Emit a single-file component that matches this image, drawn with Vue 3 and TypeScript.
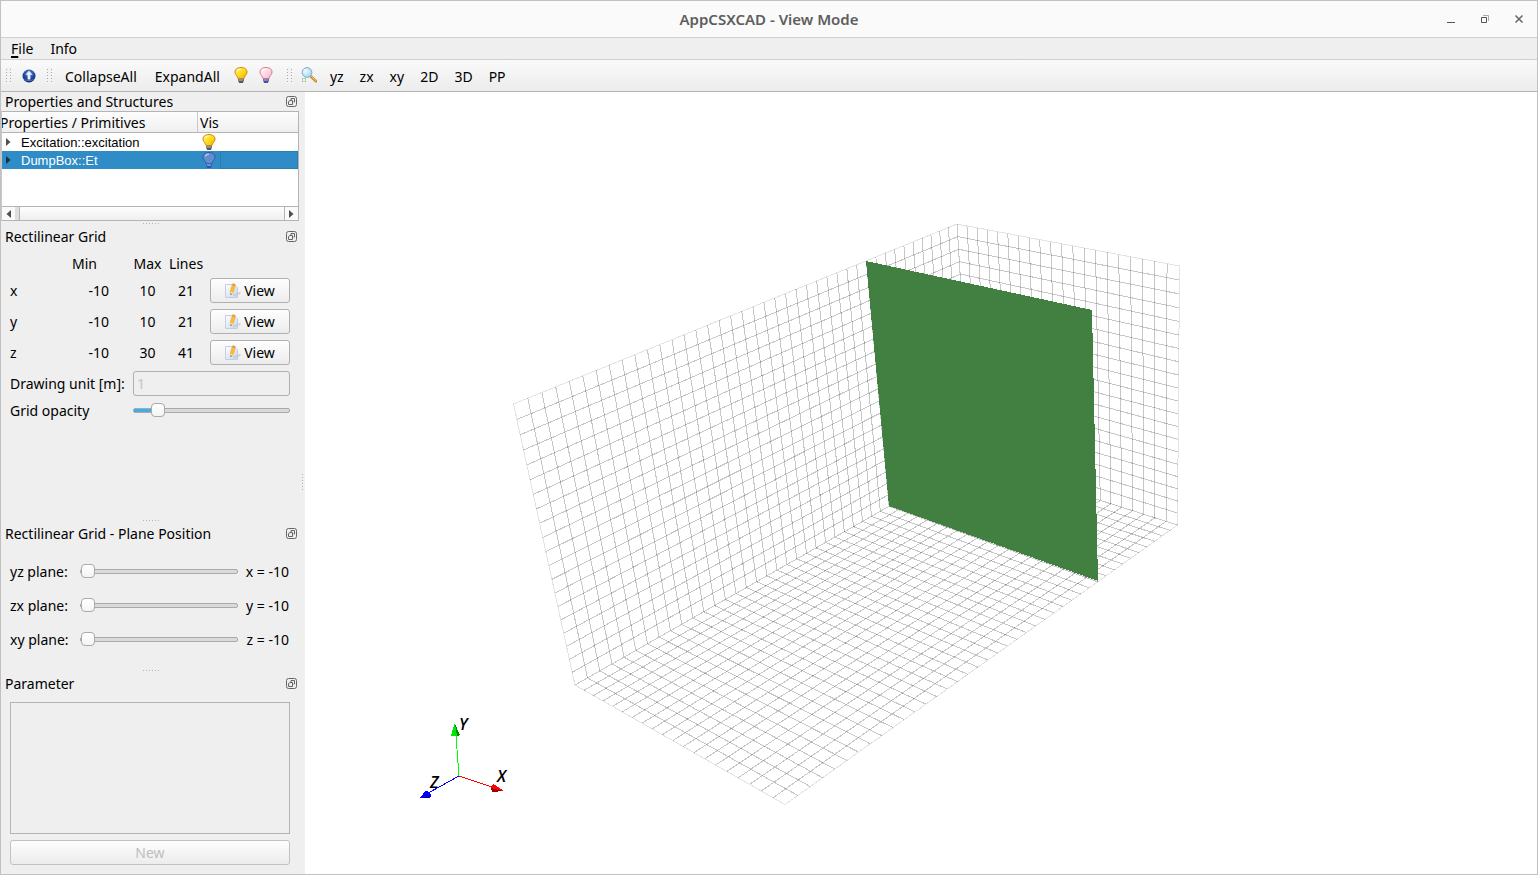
<script setup lang="ts">
import { computed, ref } from 'vue'

type Point = [number, number]
interface Segment { x1: number; y1: number; x2: number; y2: number; edge: boolean }

/** Projective map of the unit square onto the quad a(0,0) b(1,0) c(1,1) d(0,1). */
function project(a: Point, b: Point, c: Point, d: Point) {
  const dx1 = b[0] - c[0], dx2 = d[0] - c[0], sx = a[0] - b[0] + c[0] - d[0]
  const dy1 = b[1] - c[1], dy2 = d[1] - c[1], sy = a[1] - b[1] + c[1] - d[1]
  const det = dx1 * dy2 - dx2 * dy1
  const g = (sx * dy2 - dx2 * sy) / det
  const h = (dx1 * sy - sx * dy1) / det
  return (u: number, v: number): Point => {
    const w = g * u + h * v + 1
    return [
      ((b[0] - a[0] + g * b[0]) * u + (d[0] - a[0] + h * d[0]) * v + a[0]) / w,
      ((b[1] - a[1] + g * b[1]) * u + (d[1] - a[1] + h * d[1]) * v + a[1]) / w,
    ]
  }
}

function face(a: Point, b: Point, c: Point, d: Point, nu: number, nv: number): Segment[] {
  const at = project(a, b, c, d)
  const out: Segment[] = []
  const add = (p: Point, q: Point, edge: boolean) =>
    out.push({ x1: p[0], y1: p[1], x2: q[0], y2: q[1], edge })
  for (let i = 0; i <= nu; i++) add(at(i / nu, 0), at(i / nu, 1), i === 0 || i === nu)
  for (let j = 0; j <= nv; j++) add(at(0, j / nv), at(1, j / nv), j === 0 || j === nv)
  return out
}

const topBack: Point = [957, 224]
const topFront: Point = [513.5, 404]
const topRight: Point = [1179.5, 266]
const lowBack: Point = [971.7, 459.3]
const lowFront: Point = [575, 685]
const lowRight: Point = [1177.5, 525]
const lowNear: Point = [785, 804.5]

const gridLines = [
  ...face(topBack, topFront, lowFront, lowBack, 40, 20),
  ...face(topBack, topRight, lowRight, lowBack, 20, 20),
  ...face(lowBack, lowFront, lowNear, lowRight, 40, 20),
]

const opacity = ref(12)
const opacityFill = computed(() => `${opacity.value}%`)

const axes = [
  { name: 'x', min: -10, max: 10, lines: 21 },
  { name: 'y', min: -10, max: 10, lines: 21 },
  { name: 'z', min: -10, max: 30, lines: 41 },
]
const planes = ref([
  { id: 'yz', axis: 'x', max: 10, value: -10 },
  { id: 'zx', axis: 'y', max: 10, value: -10 },
  { id: 'xy', axis: 'z', max: 30, value: -10 },
])
const properties = [
  { name: 'Excitation::excitation', visible: true, selected: false },
  { name: 'DumpBox::Et', visible: false, selected: true },
]
const views = ['yz', 'zx', 'xy', '2D', '3D', 'PP']
</script>

<template>
  <div class="window">
    <svg class="defs" aria-hidden="true">
      <defs>
        <linearGradient id="gold" x1="0" y1="0" x2="1" y2="1">
          <stop offset="0" stop-color="#fff27a" /><stop offset=".5" stop-color="#ffdd1c" /><stop offset="1" stop-color="#f5a800" />
        </linearGradient>
        <linearGradient id="rose" x1="0" y1="0" x2="1" y2="1">
          <stop offset="0" stop-color="#fff" /><stop offset="1" stop-color="#f9b4cb" />
        </linearGradient>
        <radialGradient id="orb" cx=".5" cy=".3" r=".75">
          <stop offset="0" stop-color="#5c8ade" /><stop offset=".6" stop-color="#1c4295" /><stop offset="1" stop-color="#0a2160" />
        </radialGradient>
        <radialGradient id="lens" cx=".35" cy=".35" r=".8">
          <stop offset="0" stop-color="#f2fbff" /><stop offset="1" stop-color="#8fd0f0" />
        </radialGradient>
        <linearGradient id="sheet" x1="0" y1="0" x2="1" y2="1">
          <stop offset="0" stop-color="#fff" /><stop offset="1" stop-color="#c4d6ef" />
        </linearGradient>
        <symbol id="bulb" viewBox="0 0 16 16">
          <path d="M8 .5C4.500 .5 2 2.200 2 4.900c0 2.200 1.500 3.400 2.400 4.900.5.8.5 1.500.9 2h5.400c.4-.5.4-1.200.9-2C12.500 8.300 14 7.100 14 4.900 14 2.200 11.500.5 8 .5Z" fill="var(--glass)" stroke="var(--rim)" />
          <path d="M4.500 4.500C4.700 2.800 6.200 2 8 2" fill="none" stroke="#fff" stroke-opacity=".65" stroke-width="1.200" />
          <path d="M5.200 11.700h5.600v2.300L9.800 16H6.200l-1-2Z" fill="var(--base)" />
          <path d="M5.800 13h4" stroke="#fff" stroke-opacity=".7" />
        </symbol>
      </defs>
    </svg>

    <header class="titlebar">
      <h1>AppCSXCAD - View Mode</h1>
      <div class="controls">
        <button aria-label="Minimize"><svg viewBox="0 0 10 10"><path d="M1 8.500h8" /></svg></button>
        <button aria-label="Restore"><svg viewBox="0 0 10 10"><path class="faint" d="M3 1.500h5.500V7" /><path d="M1.500 3.500h5v5h-5z" /></svg></button>
        <button aria-label="Close"><svg viewBox="0 0 10 10"><path class="cross" d="M1.500 1.500l7 7M8.500 1.500l-7 7" /></svg></button>
      </div>
    </header>

    <nav class="menubar">
      <button><u>F</u>ile</button>
      <button>Info</button>
    </nav>

    <div class="toolbar" role="toolbar">
      <span class="grip"></span>
      <button class="icon orb" aria-label="Up">
        <svg viewBox="0 0 16 16"><circle cx="8" cy="8" r="6.500" fill="url(#orb)" /><path d="M8 2.700l3.600 4H9.400v4.800H6.600V6.700H4.400Z" fill="#e8f1ff" /><path d="M3.400 11c2 2.200 7.200 2.200 9.200 0" fill="none" stroke="#7fa8ee" stroke-opacity=".6" /></svg>
      </button>
      <span class="grip"></span>
      <button class="cmd">CollapseAll</button>
      <button class="cmd">ExpandAll</button>
      <button class="icon" aria-label="Show all"><svg class="gold"><use href="#bulb" /></svg></button>
      <button class="icon" aria-label="Hide all"><svg class="rose"><use href="#bulb" /></svg></button>
      <span class="grip last"></span>
      <button class="icon zoom" aria-label="Zoom to fit">
        <svg viewBox="0 0 16 16">
          <path d="M10 9.500l5 4.800" stroke="#c98a2c" stroke-width="2.600" stroke-linecap="round" />
          <path d="M10.500 9.500l4.300 4.100" stroke="#f6cf85" stroke-linecap="round" />
          <rect x="1.500" y="11.500" width="3" height="3" fill="#effaec" stroke="#a5d8a0" />
          <circle cx="6" cy="5.500" r="4.900" fill="url(#lens)" stroke="#86abc8" />
        </svg>
      </button>
      <button v-for="v in views" :key="v">{{ v }}</button>
    </div>

    <main class="workspace">
      <aside class="docks">
        <section>
          <div class="dock-head"><h2>Properties and Structures</h2>
            <button class="float" aria-label="Float"><svg viewBox="0 0 11 11"><rect x=".5" y=".5" width="10" height="10" rx="2" /><path d="M5 4V2.500h3.500V6H7.500M2.500 5.500L4 4.500h2.500v4h-4z" /></svg></button>
          </div>
          <div class="tree">
            <table>
              <colgroup><col class="c-name" /><col /></colgroup>
              <thead><tr><th>Properties / Primitives</th><th>Vis</th></tr></thead>
              <tbody>
                <tr v-for="p in properties" :key="p.name" :class="{ selected: p.selected }">
                  <td><div class="node"><button aria-label="Expand"><svg viewBox="0 0 5 8"><path d="M0 0l4.500 4L0 8z" /></svg></button><span>{{ p.name }}</span></div></td>
                  <td><div class="vis"><svg :class="p.visible ? 'gold' : 'blue'"><use href="#bulb" /></svg><i></i></div></td>
                </tr>
              </tbody>
            </table>
            <div class="scroll">
              <button aria-label="Scroll left"><svg viewBox="0 0 5 8"><path d="M5 0L.5 4L5 8z" /></svg></button>
              <span class="thumb"></span>
              <button aria-label="Scroll right"><svg viewBox="0 0 5 8"><path d="M0 0l4.500 4L0 8z" /></svg></button>
            </div>
          </div>
        </section>

        <div class="split"></div>

        <section class="grow">
          <div class="dock-head"><h2>Rectilinear Grid</h2>
            <button class="float" aria-label="Float"><svg viewBox="0 0 11 11"><rect x=".5" y=".5" width="10" height="10" rx="2" /><path d="M5 4V2.500h3.500V6H7.500M2.500 5.500L4 4.500h2.500v4h-4z" /></svg></button>
          </div>
          <div class="grid-body">
            <table class="grid-table">
              <colgroup><col class="g1" /><col class="g2" /><col class="g3" /><col class="g4" /><col /></colgroup>
              <thead><tr><td></td><th>Min</th><th class="max">Max</th><th>Lines</th><td></td></tr></thead>
              <tbody>
                <tr v-for="a in axes" :key="a.name">
                  <th class="axis">{{ a.name }}</th>
                  <td class="min">{{ a.min }}</td><td class="max">{{ a.max }}</td><td>{{ a.lines }}</td>
                  <td>
                    <button class="push">
                      <svg viewBox="0 0 16 16">
                        <path d="M.5 1.500H9L12.500 5v9.500H.5z" fill="url(#sheet)" stroke="#c3cede" />
                        <path d="M8 11.500l7.500-3v2.500L8 13.500z" fill="#c4c8d0" fill-opacity=".7" />
                        <path d="M7.400 1.300l2.800 1L8.300 9.300 5.900 11.900 5.300 8.500Z" fill="#fbbd2c" stroke="#e39a22" stroke-width=".5" />
                        <path d="M7.200 2.100L7.900.3l2.700 1-.6 1.800z" fill="#ee8a5c" />
                        <path d="M5.300 8.600l2.900.8L5.900 11.900z" fill="#f6dfb0" /><path d="M5.600 10.400l1.200.4-1 1.300z" fill="#333" />
                      </svg>View
                    </button>
                  </td>
                </tr>
              </tbody>
            </table>
            <div class="field unit"><label for="unit">Drawing unit [m]:</label><input id="unit" type="text" value="1" disabled /></div>
            <div class="field"><label for="opacity">Grid opacity</label><input id="opacity" v-model.number="opacity" type="range" min="0" max="100" :style="{ '--fill': opacityFill }" /></div>
          </div>
        </section>

        <div class="split"></div>

        <section>
          <div class="dock-head"><h2>Rectilinear Grid - Plane Position</h2>
            <button class="float" aria-label="Float"><svg viewBox="0 0 11 11"><rect x=".5" y=".5" width="10" height="10" rx="2" /><path d="M5 4V2.500h3.500V6H7.500M2.500 5.500L4 4.500h2.500v4h-4z" /></svg></button>
          </div>
          <div class="planes">
            <div v-for="p in planes" :key="p.id" class="plane">
              <label :for="'plane-' + p.id">{{ p.id }} plane:</label>
              <input :id="'plane-' + p.id" v-model.number="p.value" type="range" min="-10" :max="p.max" />
              <output :for="'plane-' + p.id">{{ p.axis }} = {{ p.value }}</output>
            </div>
          </div>
        </section>

        <div class="split"></div>

        <section>
          <div class="dock-head"><h2>Parameter</h2>
            <button class="float" aria-label="Float"><svg viewBox="0 0 11 11"><rect x=".5" y=".5" width="10" height="10" rx="2" /><path d="M5 4V2.500h3.500V6H7.500M2.500 5.500L4 4.500h2.500v4h-4z" /></svg></button>
          </div>
          <div class="params">
            <div class="param-list"></div>
            <button class="push" disabled>New</button>
          </div>
        </section>
      </aside>
      <div class="vsplit"></div>

      <div class="view">
        <svg viewBox="305 92 1232 782" role="img" aria-label="3D view">
          <g class="mesh">
            <line v-for="(l, i) in gridLines" :key="i" :x1="l.x1" :y1="l.y1" :x2="l.x2" :y2="l.y2" :class="{ edge: l.edge }" />
          </g>
          <polygon class="plate" points="866,261 1092,310 1098,581 889,506" />
          <g class="triad">
            <path d="M459 776L456 736" stroke="#0f0" />
            <path d="M459 776L492 787" stroke="#f00" />
            <path d="M459 776L430 792" stroke="#00f" />
            <path d="M454.500 723.500L460 735l-4 1.500L451 735.500z" fill="#00e400" /><path d="M455 724l5 11-3 1.500z" fill="#008a00" />
            <path d="M503 790.500L493 783.500l-2 4 1 4z" fill="#f00" /><path d="M503 791l-12-3 1 4z" fill="#9a0000" />
            <path d="M419 798.500l7-8 4 2 1 3.500-2 2z" fill="#00f" /><path d="M419 798.500l12-3-2 2.500z" fill="#000096" />
            <text x="459" y="730">Y</text>
            <text x="497" y="782">X</text>
            <text x="430" y="788">Z</text>
          </g>
        </svg>
      </div>
    </main>
  </div>
</template>

<style>
body { margin: 0; }
</style>

<style scoped>
* { box-sizing: border-box; }
.window {
  min-height: 100vh; display: flex; flex-direction: column;
  border: 1px solid #c1c1c1; background: #efefef; color: #000;
  font: 14px/17px "Noto Sans", sans-serif;
}
.defs { position: absolute; width: 0; height: 0; }
button { font: inherit; color: inherit; background: none; border: 0; padding: 0; margin: 0; }
svg { display: block; }
.titlebar { height: 37px; background: #fafafa; border-bottom: 1px solid #d0d0d0; display: grid; grid-template-columns: 1fr auto 1fr; align-items: center; }
h1 { grid-column: 2; margin: 0; font-size: 15px; font-weight: 600; color: #5e5e5e; }
.controls { display: flex; justify-content: flex-end; gap: 24px; padding-right: 13px; }
.controls button, .controls svg { width: 10px; height: 10px; }
.controls path { fill: none; stroke: #555; }
.controls .faint { stroke: #aaa; }
.controls .cross { stroke: #666; stroke-width: 1.5; }
.menubar { height: 22px; border-bottom: 1px solid #d0d0d0; display: flex; align-items: center; gap: 17px; padding-left: 10px; }
.menubar u { text-decoration-thickness: 2px; text-underline-offset: 2px; }
.toolbar { height: 32px; background: linear-gradient(#fafafa, #ececec); border-bottom: 1px solid #b4b4b4; display: flex; align-items: center; }
.toolbar button { padding: 2px 8px 0; }
.toolbar .cmd { padding: 2px 9px 0; }
.toolbar .icon { width: 25px; padding: 0; display: flex; justify-content: center; }
.toolbar .icon svg { width: 16px; height: 16px; margin-bottom: 2px; }
.toolbar .orb { width: 27px; }
.toolbar .orb svg { margin: 0; }
.toolbar .zoom { width: 26px; }
.grip { width: 5px; height: 17px; margin: 0 4px 0 5px; background: repeating-linear-gradient(transparent 0 2px, #efefef 2px 3px, transparent 3px 3px), repeating-linear-gradient(90deg, #bdbdbd 0 1px, transparent 1px 4px); background: repeating-linear-gradient(#f3f3f3 0 2px, transparent 2px 3px), repeating-linear-gradient(90deg, #a8a8a8 0 1px, transparent 1px 4px); }
.last { margin-left: 8px; }
.gold { --glass: url(#gold); --rim: #d0860a; --base: #55585c; }
.rose { --glass: url(#rose); --rim: #d9718c; --base: #4b4e9c; }
.blue { --glass: #5f8fd0; --rim: #3a569c; --base: #2a55c0; }

.workspace { flex: 1; display: flex; }
.docks { width: 298px; display: flex; flex-direction: column; }
.grow { flex: 1; }
.dock-head { height: 19px; display: flex; align-items: center; justify-content: space-between; padding: 0 2px 0 4px; }
h2 { margin: 0; font-size: 14px; font-weight: 400; }
.float svg { width: 11px; height: 11px; }
.float rect, .float path { fill: none; stroke: #666; }
.split { height: 6px; padding: 0 0 2px 4px; display: flex; justify-content: center; align-items: center; }
.split::before { content: ""; width: 18px; height: 1px; background: repeating-linear-gradient(90deg, #b4b4b4 0 1px, transparent 1px 3px); }
.vsplit { width: 6px; display: flex; align-items: center; justify-content: center; }
.vsplit::before { content: ""; width: 1px; height: 18px; background: repeating-linear-gradient(#b4b4b4 0 1px, transparent 1px 3px); }

.tree { height: 110px; border: 1px solid #b4b4b4; border-left-color: #c8c8c8; background: #fff; display: flex; flex-direction: column; justify-content: space-between; overflow: hidden; }
.tree table { width: 100%; table-layout: fixed; border-collapse: separate; border-spacing: 0; }
.c-name { width: 196px; }
.tree th { height: 21px; padding: 0 0 0 2px; font-weight: 400; text-align: left; background: linear-gradient(#fdfdfd, #efefef); border-bottom: 1px solid #b4b4b4; white-space: nowrap; }
.tree th:first-child { border-right: 1px solid #c8c8c8; padding: 0; text-indent: -2px; }
.tree td { height: 18px; padding: 0; font: 13px/18px "Liberation Sans", sans-serif; }
.node { display: flex; align-items: center; height: 18px; }
.node span { padding-top: 2px; }
.node button { width: 19px; height: 18px; padding-left: 4px; }
.node svg { width: 5px; height: 8px; fill: #505050; }
.selected { background: #308cc6; color: #fff; }
.selected .node svg { fill: #10334a; }
.vis { display: flex; height: 18px; align-items: center; padding-left: 3px; }
.vis svg { width: 16px; height: 16px; }
.vis i { flex: 1; align-self: stretch; margin-left: 3px; }
.selected .vis i { border: 1px solid #2b7eb2; }
.scroll { height: 14px; border-top: 1px solid #b4b4b4; display: flex; background: #dedede; }
.scroll button { width: 13px; background: #fafafa; display: flex; align-items: center; justify-content: center; }
.scroll svg { width: 5px; height: 8px; fill: #505050; }
.thumb { flex: 1; margin-left: 4px; border: solid #b4b4b4; border-width: 0 1px; background: linear-gradient(#fdfdfd, #efefef); }

.grid-body { padding: 8px 9px 0; }
.grid-table { width: 100%; table-layout: fixed; border-collapse: collapse; text-align: center; }
.g1 { width: 50px; } .g2 { width: 49px; } .g3 { width: 53px; } .g4 { width: 48px; }
.grid-table th, .grid-table td { height: 31px; padding: 0; font-weight: 400; }
.grid-table thead th, .grid-table thead td { height: 21px; padding-bottom: 2px; }
.grid-table .axis { text-align: left; }
.grid-table .min { text-align: right; }
.grid-table .max { padding-left: 24px; }
.push { width: 100%; height: 25px; display: flex; align-items: center; justify-content: center; gap: 3px; border: 1px solid #b0b0b0; border-radius: 3px; background: linear-gradient(#fefefe, #ececec); }
.push svg { width: 16px; height: 16px; }
.push:disabled { color: #bebebe; border-color: #c2c2c2; }
.field { display: flex; align-items: center; height: 17px; }
.field label { width: 123px; white-space: nowrap; }
.field.unit { height: 25px; margin: 3px 0 6px; }
.field input { flex: 1; min-width: 0; }
.unit input { height: 25px; padding: 0 3px; border: 1px solid #b0b0b0; border-radius: 3px; background: #efefef; color: #c4c4c4; font: inherit; }

input[type="range"] { --fill: 0%; appearance: none; height: 14px; margin: 0; background: none; }
input[type="range"]::-webkit-slider-runnable-track { height: 5px; border: 1px solid #aaa; border-radius: 2px; background: linear-gradient(90deg, #3daee9 var(--fill), #dadada var(--fill)); }
input[type="range"]::-webkit-slider-thumb { appearance: none; width: 14px; height: 14px; margin-top: -6px; border: 1px solid #aaa; border-radius: 4px; background: linear-gradient(#fff, #f4f4f4); }
.planes { display: flex; flex-direction: column; gap: 17px; padding: 20px 10px 20px 9px; }
.plane { display: flex; align-items: center; height: 17px; }
.plane label { width: 70px; white-space: nowrap; }
.plane input { flex: 1; min-width: 0; }
.plane output { width: 51px; text-align: right; white-space: nowrap; }
.params { display: flex; flex-direction: column; gap: 6px; padding: 9px; }
.param-list { height: 132px; border: 1px solid #b4b4b4; }

.view { flex: 1; min-width: 0; background: #fff; display: flex; }
.view svg { flex: 1; min-width: 0; width: 100%; height: 100%; }
.mesh line { stroke: #000; stroke-opacity: .22; shape-rendering: crispEdges; }
.mesh .edge { stroke-opacity: .11; }
.plate { fill: #428042; shape-rendering: crispEdges; }
.triad path { shape-rendering: crispEdges; }
.triad text { font: italic 600 16px "Open Sans", sans-serif; }
</style>
